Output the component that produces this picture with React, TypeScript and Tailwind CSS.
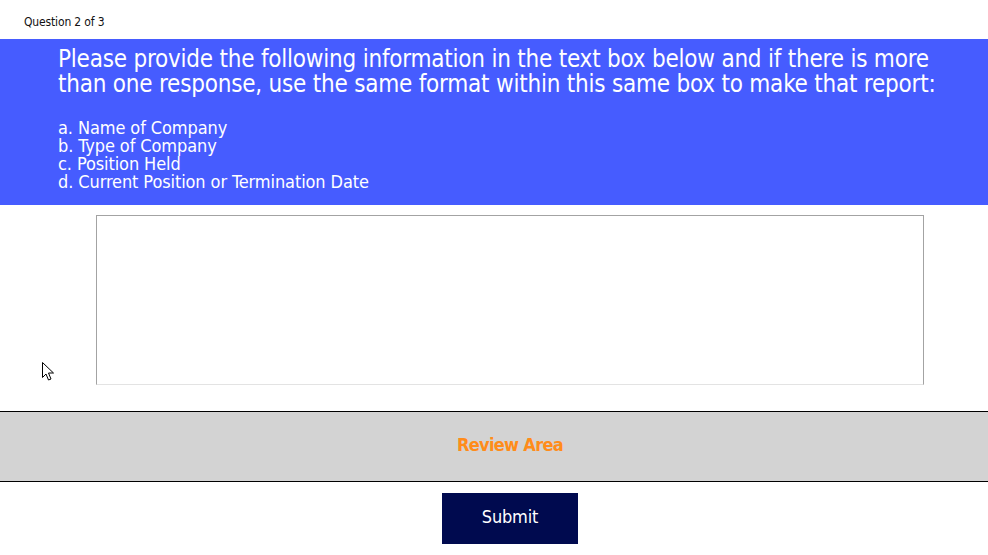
const font = { fontFamily: "'DejaVu Sans Condensed', 'DejaVu Sans', sans-serif" };

function Cursor() {
  return (
    <svg
      className="absolute left-[41px] top-[361px]"
      width="14"
      height="21"
      viewBox="0 0 14 21"
    >
      <path
        d="M1.5 1.5 L1.5 16.5 L5 13 L7.5 19 L10 18 L7.5 12 L12.5 12 Z"
        fill="#fff"
        stroke="#000"
        strokeWidth="1"
        strokeLinejoin="miter"
      />
    </svg>
  );
}

export default function App() {
  return (
    <div className="relative w-[988px] h-[555px] bg-white overflow-hidden" style={font}>
      <div className="h-[39px] pl-[24px] pt-[14px] text-[12px] leading-[16px] text-[#111] tracking-[-0.15px]">
        Question 2 of 3
      </div>
      <div className="bg-[#465cff] text-white pl-[58px] pt-[8px] pb-[14px]">
        <div className="text-[24px] leading-[25px] tracking-[-0.22px]">
          Please provide the following information in the text box below and if there is more
          <br />
          than one response, use the same format within this same box to make that report:
        </div>
        <div className="mt-[22px] text-[18px] leading-[18px] tracking-[-0.1px]">
          <div>a. Name of Company</div>
          <div>b. Type of Company</div>
          <div>c. Position Held</div>
          <div>d. Current Position or Termination Date</div>
        </div>
      </div>
      <div className="pt-[10px] pl-[96px]">
        <textarea
          className="block w-[828px] h-[170px] resize-none border border-[#a3a3a3] border-b-[#e3e3e3] outline-none bg-white"
          aria-label="Response"
        />
      </div>
      <div className="mt-[26px] h-[71px] border-y border-black bg-[#d3d3d3] flex items-center justify-center pl-[32px] pb-[4px]">
        <span className="text-[18px] font-bold text-[#ff8c1a] tracking-[-0.7px]">Review Area</span>
      </div>
      <div className="mt-[11px] flex justify-center pl-[32px]">
        <button className="w-[136px] h-[51px] pb-[4px] bg-[#000a4f] text-white text-[18px] tracking-[-0.2px]" style={font}>
          Submit
        </button>
      </div>
      <Cursor />
    </div>
  );
}
